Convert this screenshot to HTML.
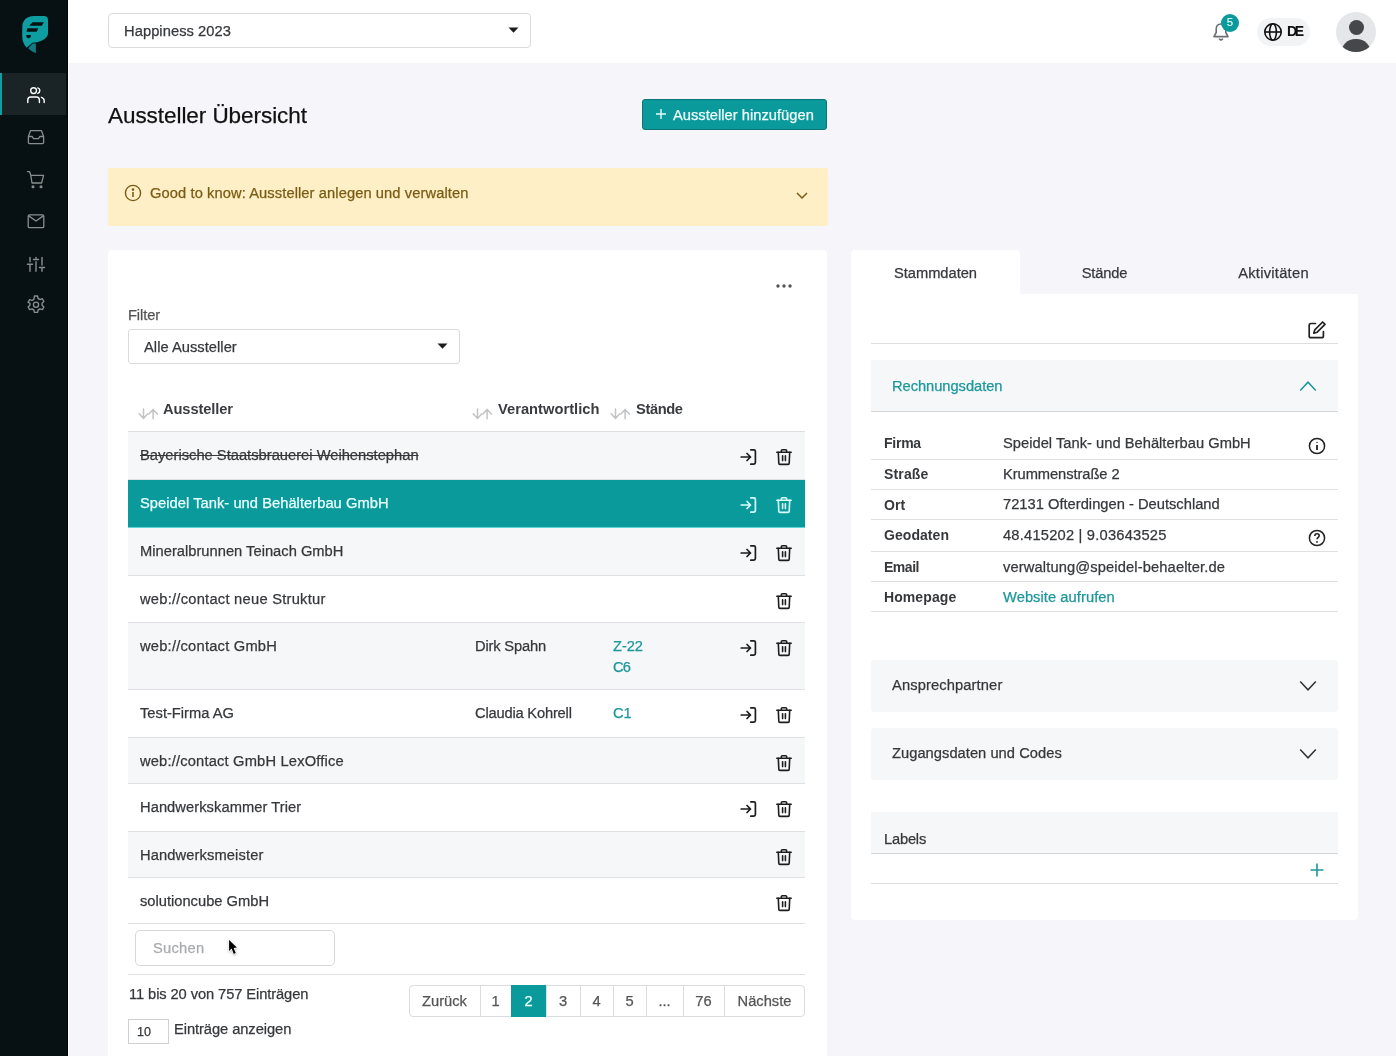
<!DOCTYPE html>
<html><head><meta charset="utf-8">
<style>
*{box-sizing:border-box;margin:0;padding:0}
html,body{width:1396px;height:1056px;overflow:hidden}
body{position:relative;background:#f5f5fa;font-family:"Liberation Sans",sans-serif;font-size:14.7px;line-height:20px;color:#333;-webkit-font-smoothing:antialiased}
.a{position:absolute}
.t{position:absolute;white-space:nowrap;will-change:transform;-webkit-text-stroke:0.25px currentColor}
.nb{-webkit-text-stroke:0}
svg{display:block}
</style></head><body>
<div class="a" style="left:0px;top:0px;width:68px;height:1056px;background:#071113;"></div>
<svg class="a" style="left:18px;top:12px" width="36" height="46" viewBox="0 0 36 46">
<path d="M4.3 14.5 C4.6 8 9 3.9 16 3.9 L26 3.9 C28.6 3.9 30 5.4 30 8 L30 21.5 C30 26.5 22 30.5 14.4 30.8 L8.7 35.8 C5.8 32.5 4.2 29 4.2 24 Z" fill="#0e9ea1"/>
<path d="M14.6 31.6 L17.9 31.6 L17.9 41.2 C15 40 12 38.3 10.2 36.3 Z" fill="#137a80"/>
<path d="M14.6 10.2 L25.9 10.2 L23.8 13.7 L11.1 13.7 Z" fill="#071113"/>
<path d="M9.4 16.3 L20.3 16.3 L18.7 19.8 L8.5 19.8 Z" fill="#071113"/>
<path d="M8.3 23.1 L12.9 23.1 L12.6 25.2 L10.6 26.6 L8.5 25.2 Z" fill="#071113"/>
</svg>
<div class="a" style="left:0px;top:73px;width:66px;height:42px;background:#1a2326;"></div>
<div class="a" style="left:67px;top:0px;width:1px;height:1056px;background:#020707;"></div>
<div class="a" style="left:68px;top:0px;width:1px;height:1056px;background:#ffffff;"></div>
<div class="a" style="left:0px;top:73px;width:1.5px;height:42px;background:#0e9ea0;"></div>
<svg class="a" style="left:26px;top:85px" width="20" height="20" viewBox="0 0 20 20" fill="none" stroke="#fff" stroke-width="1.4" stroke-linecap="round">
<circle cx="7.6" cy="5.6" r="2.9"/>
<path d="M11.8 2.9 A2.8 2.8 0 0 1 11.8 8.3"/>
<path d="M1.8 17.5 V15 C1.8 13.2 3 12 4.8 12 H10.4 C12.2 12 13.4 13.2 13.4 15 V17.5"/>
<path d="M15.4 12.3 C17 12.8 18.2 14 18.2 15.8 V17.5"/>
</svg>
<svg class="a" style="left:26px;top:127px" width="20" height="20" viewBox="0 0 20 20" fill="none" stroke="#8a8d8f" stroke-width="1.3" stroke-linejoin="round">
<path d="M2.4 9.5 L4.6 3.6 H15.4 L17.6 9.5 V15.6 C17.6 16.2 17.2 16.6 16.6 16.6 H3.4 C2.8 16.6 2.4 16.2 2.4 15.6 Z"/>
<path d="M2.4 9.5 H6.2 L7.5 11.6 H12.5 L13.8 9.5 H17.6"/>
</svg>
<svg class="a" style="left:26px;top:170px" width="20" height="20" viewBox="0 0 20 20" fill="none" stroke="#8a8d8f" stroke-width="1.3" stroke-linejoin="round" stroke-linecap="round">
<path d="M1.4 1.6 H3.6 L4.8 5.3 L6 13 H15.6 L17.6 5.3 H4.8"/>
<circle cx="7" cy="16.8" r="0.9" fill="#8a8d8f"/>
<circle cx="15" cy="16.8" r="0.9" fill="#8a8d8f"/>
</svg>
<svg class="a" style="left:26px;top:211px" width="20" height="20" viewBox="0 0 20 20" fill="none" stroke="#8a8d8f" stroke-width="1.3" stroke-linejoin="round">
<rect x="2.2" y="3.9" width="15.6" height="12.8" rx="1.3"/>
<path d="M2.4 4.6 L10 10 L17.6 4.6"/>
</svg>
<svg class="a" style="left:26px;top:254px" width="20" height="20" viewBox="0 0 20 20" fill="none" stroke="#8a8d8f" stroke-width="1.4" stroke-linecap="round">
<path d="M4 3.5 V7.8 M4 10.8 V17.3 M1.5 10.3 H6.5"/>
<path d="M10 3.5 V4.8 M10 7.8 V17.3 M7.5 5.5 H12.5"/>
<path d="M16 3.5 V11 M16 14.2 V17.3 M13.5 13.5 H18.5"/>
</svg>
<svg class="a" style="left:25px;top:294px" width="22" height="22" viewBox="0 0 24 24" fill="none" stroke="#8a8d8f" stroke-width="1.5" stroke-linejoin="round">
<path d="M10.3 2.2 h3.4 l.6 2.7 a7.5 7.5 0 0 1 2 1.15 l2.65-.85 1.7 2.95-2.05 1.85 a7.5 7.5 0 0 1 0 2.3 l2.05 1.85-1.7 2.95-2.65-.85 a7.5 7.5 0 0 1-2 1.15 l-.6 2.7 h-3.4 l-.6-2.7 a7.5 7.5 0 0 1-2-1.15 l-2.65.85-1.7-2.95 2.05-1.85 a7.5 7.5 0 0 1 0-2.3 L3.35 9.15 5.05 6.2 l2.65.85 a7.5 7.5 0 0 1 2-1.15 z"/>
<circle cx="12" cy="11.7" r="2.8"/>
</svg>
<div class="a" style="left:68px;top:0px;width:1328px;height:63px;background:#fff;"></div>
<div class="a" style="left:108px;top:13px;width:423px;height:35px;background:#fff;border:1px solid #d9dbde;border-radius:4px"></div>
<div class="t" style="left:124px;top:21px;font-size:14.7px;line-height:20px;height:20px;color:#36383c;letter-spacing:0.062px;">Happiness 2023</div>
<svg class="a" style="left:508px;top:27px" width="11" height="7" viewBox="0 0 11 7"><path d="M0.5 0.5 H10.5 L5.5 5.8 Z" fill="#1c1d1f"/></svg>
<svg class="a" style="left:1211px;top:20px" width="20" height="22" viewBox="0 0 20 22" fill="none" stroke="#6b6e72" stroke-width="1.6" stroke-linejoin="round" stroke-linecap="round">
<path d="M10 4 C6.8 4 5.2 6.3 5.2 9.2 V12.5 L3 16.6 H17 L14.8 12.5 V9.2 C14.8 6.3 13.2 4 10 4 Z"/>
<path d="M8.5 19.2 L10 20.2 L11.5 19.2"/>
</svg>
<div class="a" style="left:1221px;top:14px;width:18px;height:18px;border-radius:50%;background:#0a9a9b;color:#eaffff;font-size:11.5px;line-height:17px;text-align:center;will-change:transform;-webkit-text-stroke:0.1px #eaffff">5</div>
<div class="a" style="left:1257px;top:18px;width:53px;height:28px;background:#f2f3f5;border-radius:14px"></div>
<svg class="a" style="left:1263px;top:22px" width="20" height="20" viewBox="0 0 20 20" fill="none" stroke="#111" stroke-width="1.6">
<circle cx="10" cy="10" r="8.2"/><ellipse cx="10" cy="10" rx="3.4" ry="8.2"/><path d="M1.8 10 H18.2"/>
</svg>
<div class="t" style="left:1287px;top:21px;font-size:14px;line-height:20px;height:20px;font-weight:bold;-webkit-text-stroke:0;color:#111;letter-spacing:-2.400px;">DE</div>
<div class="a" style="left:1336px;top:12px;width:40px;height:40px;border-radius:50%;background:#e4e6e9;overflow:hidden">
<div class="a" style="left:12.5px;top:8px;width:15px;height:15px;border-radius:50%;background:#46474b"></div>
<div class="a" style="left:5px;top:26.5px;width:30px;height:24px;border-radius:48% 48% 50% 50% / 60% 60% 40% 40%;background:#46474b"></div>
</div>
<div class="t" style="left:108px;top:102px;font-size:22.5px;line-height:28px;height:28px;color:#111;letter-spacing:-0.058px;">Aussteller Übersicht</div>
<div class="a" style="left:642px;top:99px;width:185px;height:31px;background:#0a9a9b;border:1px solid #0b7476;border-radius:3px"></div>
<svg class="a" style="left:655px;top:108px" width="12" height="12" viewBox="0 0 12 12" stroke="#e6fbfb" stroke-width="1.4"><path d="M6 1 V11 M1 6 H11"/></svg>
<div class="t" style="left:673px;top:105px;font-size:14.7px;line-height:20px;height:20px;color:#eefcfc;letter-spacing:0.020px;">Aussteller hinzufügen</div>
<div class="a" style="left:108px;top:168px;width:720px;height:58px;background:#feefc6;border-radius:2px"></div>
<svg class="a" style="left:124px;top:184px" width="18" height="18" viewBox="0 0 18 18" fill="none" stroke="#7a5b14" stroke-width="1.4"><circle cx="9" cy="9" r="7.6"/><path d="M9 8 V13" stroke-width="1.6"/><circle cx="9" cy="5.6" r="0.6" fill="#7a5b14"/></svg>
<div class="t" style="left:150px;top:183px;font-size:14.7px;line-height:20px;height:20px;color:#7a5b14;letter-spacing:0.089px;">Good to know: Aussteller anlegen und verwalten</div>
<svg class="a" style="left:796px;top:191px" width="12" height="9" viewBox="0 0 12 9" fill="none" stroke="#7a5b14" stroke-width="1.5"><path d="M1 2 L6 7 L11 2"/></svg>
<div class="a" style="left:108px;top:250px;width:719px;height:820px;background:#fff;border-radius:4px"></div>
<svg class="a" style="left:775px;top:283px" width="18" height="6" viewBox="0 0 18 6" fill="#555"><circle cx="3" cy="3" r="1.7"/><circle cx="9" cy="3" r="1.7"/><circle cx="15" cy="3" r="1.7"/></svg>
<div class="t" style="left:128px;top:305px;font-size:14.7px;line-height:20px;height:20px;color:#555;letter-spacing:-0.100px;">Filter</div>
<div class="a" style="left:128px;top:329px;width:332px;height:35px;background:#fff;border:1px solid #d9dbde;border-radius:3px"></div>
<div class="t" style="left:144px;top:337px;font-size:14.7px;line-height:20px;height:20px;color:#36383c;letter-spacing:0.036px;">Alle Aussteller</div>
<svg class="a" style="left:437px;top:343px" width="11" height="7" viewBox="0 0 11 7"><path d="M0.5 0.5 H10.5 L5.5 5.8 Z" fill="#1c1d1f"/></svg>
<svg class="a" style="left:136.5px;top:406px" width="22" height="15" viewBox="0 0 22 15" fill="none" stroke="#c2c3c5" stroke-width="1.5" stroke-linecap="round" stroke-linejoin="round"><path d="M6.5 3 V12.5 M2.2 7.8 L6.5 12.5 L10.8 7.8"/><path d="M16.1 3.4 V12.7 M11.9 8 L16.1 3.4 L20.5 8"/></svg>
<div class="t" style="left:163px;top:399px;font-size:14.7px;line-height:20px;height:20px;font-weight:bold;-webkit-text-stroke:0;color:#3a3c40;letter-spacing:-0.122px;">Aussteller</div>
<svg class="a" style="left:471px;top:406px" width="22" height="15" viewBox="0 0 22 15" fill="none" stroke="#c2c3c5" stroke-width="1.5" stroke-linecap="round" stroke-linejoin="round"><path d="M6.5 3 V12.5 M2.2 7.8 L6.5 12.5 L10.8 7.8"/><path d="M16.1 3.4 V12.7 M11.9 8 L16.1 3.4 L20.5 8"/></svg>
<div class="t" style="left:498px;top:399px;font-size:14.7px;line-height:20px;height:20px;font-weight:bold;-webkit-text-stroke:0;color:#3a3c40;letter-spacing:0.015px;">Verantwortlich</div>
<svg class="a" style="left:609px;top:406px" width="22" height="15" viewBox="0 0 22 15" fill="none" stroke="#c2c3c5" stroke-width="1.5" stroke-linecap="round" stroke-linejoin="round"><path d="M6.5 3 V12.5 M2.2 7.8 L6.5 12.5 L10.8 7.8"/><path d="M16.1 3.4 V12.7 M11.9 8 L16.1 3.4 L20.5 8"/></svg>
<div class="t" style="left:636px;top:399px;font-size:14.7px;line-height:20px;height:20px;font-weight:bold;-webkit-text-stroke:0;color:#3a3c40;letter-spacing:-0.400px;">Stände</div>
<div class="a" style="left:128px;top:431px;width:677px;height:1px;background:#dcdee1;"></div>
<div class="a" style="left:128px;top:432px;width:677px;height:47px;background:#f6f7f9;"></div>
<div class="a" style="left:128px;top:479px;width:677px;height:1px;background:#dee0e3;"></div>
<div class="t" style="left:140px;top:445px;font-size:14.7px;line-height:20px;height:20px;color:#36383c;letter-spacing:0.011px;text-decoration:line-through;">Bayerische Staatsbrauerei Weihenstephan</div>
<svg class="a" style="left:740px;top:448px" width="18" height="18" viewBox="0 0 18 18" fill="none" stroke="#1c1d1f" stroke-width="1.7" stroke-linecap="round" stroke-linejoin="round"><path d="M1.2 9 H10.5 M7 5.5 L10.5 9 L7 12.5"/><path d="M10.8 1.8 H13.8 C14.8 1.8 15.4 2.4 15.4 3.4 V14.6 C15.4 15.6 14.8 16.2 13.8 16.2 H10.8"/></svg>
<svg class="a" style="left:775px;top:448px" width="18" height="18" viewBox="0 0 18 18" fill="none" stroke="#1c1d1f" stroke-width="1.6" stroke-linecap="round" stroke-linejoin="round"><path d="M6.3 3.6 V2.8 C6.3 2.1 6.7 1.7 7.4 1.7 H10.6 C11.3 1.7 11.7 2.1 11.7 2.8 V3.6"/><path d="M1.8 4.3 H16.2"/><path d="M3.3 4.3 L3.8 15.2 C3.8 15.9 4.3 16.4 5 16.4 H13 C13.7 16.4 14.2 15.9 14.2 15.2 L14.7 4.3"/><path d="M7.6 7.8 V12.6 M10.4 7.8 V12.6"/></svg>
<div class="a" style="left:128px;top:480px;width:677px;height:47px;background:#0a9a9b;"></div>
<div class="a" style="left:128px;top:527px;width:677px;height:1px;background:#5fd4d4;"></div>
<div class="t" style="left:140px;top:493px;font-size:14.7px;line-height:20px;height:20px;color:#eaffff;letter-spacing:0.042px;">Speidel Tank- und Behälterbau GmbH</div>
<svg class="a" style="left:740px;top:496px" width="18" height="18" viewBox="0 0 18 18" fill="none" stroke="#d8ffff" stroke-width="1.7" stroke-linecap="round" stroke-linejoin="round"><path d="M1.2 9 H10.5 M7 5.5 L10.5 9 L7 12.5"/><path d="M10.8 1.8 H13.8 C14.8 1.8 15.4 2.4 15.4 3.4 V14.6 C15.4 15.6 14.8 16.2 13.8 16.2 H10.8"/></svg>
<svg class="a" style="left:775px;top:496px" width="18" height="18" viewBox="0 0 18 18" fill="none" stroke="#d8ffff" stroke-width="1.6" stroke-linecap="round" stroke-linejoin="round"><path d="M6.3 3.6 V2.8 C6.3 2.1 6.7 1.7 7.4 1.7 H10.6 C11.3 1.7 11.7 2.1 11.7 2.8 V3.6"/><path d="M1.8 4.3 H16.2"/><path d="M3.3 4.3 L3.8 15.2 C3.8 15.9 4.3 16.4 5 16.4 H13 C13.7 16.4 14.2 15.9 14.2 15.2 L14.7 4.3"/><path d="M7.6 7.8 V12.6 M10.4 7.8 V12.6"/></svg>
<div class="a" style="left:128px;top:528px;width:677px;height:47px;background:#f6f7f9;"></div>
<div class="a" style="left:128px;top:575px;width:677px;height:1px;background:#dee0e3;"></div>
<div class="t" style="left:140px;top:541px;font-size:14.7px;line-height:20px;height:20px;color:#36383c;letter-spacing:0.015px;">Mineralbrunnen Teinach GmbH</div>
<svg class="a" style="left:740px;top:544px" width="18" height="18" viewBox="0 0 18 18" fill="none" stroke="#1c1d1f" stroke-width="1.7" stroke-linecap="round" stroke-linejoin="round"><path d="M1.2 9 H10.5 M7 5.5 L10.5 9 L7 12.5"/><path d="M10.8 1.8 H13.8 C14.8 1.8 15.4 2.4 15.4 3.4 V14.6 C15.4 15.6 14.8 16.2 13.8 16.2 H10.8"/></svg>
<svg class="a" style="left:775px;top:544px" width="18" height="18" viewBox="0 0 18 18" fill="none" stroke="#1c1d1f" stroke-width="1.6" stroke-linecap="round" stroke-linejoin="round"><path d="M6.3 3.6 V2.8 C6.3 2.1 6.7 1.7 7.4 1.7 H10.6 C11.3 1.7 11.7 2.1 11.7 2.8 V3.6"/><path d="M1.8 4.3 H16.2"/><path d="M3.3 4.3 L3.8 15.2 C3.8 15.9 4.3 16.4 5 16.4 H13 C13.7 16.4 14.2 15.9 14.2 15.2 L14.7 4.3"/><path d="M7.6 7.8 V12.6 M10.4 7.8 V12.6"/></svg>
<div class="a" style="left:128px;top:576px;width:677px;height:46px;background:#fff;"></div>
<div class="a" style="left:128px;top:622px;width:677px;height:1px;background:#dee0e3;"></div>
<div class="t" style="left:140px;top:589px;font-size:14.7px;line-height:20px;height:20px;color:#36383c;letter-spacing:0.250px;">web://contact neue Struktur</div>
<svg class="a" style="left:775px;top:592px" width="18" height="18" viewBox="0 0 18 18" fill="none" stroke="#1c1d1f" stroke-width="1.6" stroke-linecap="round" stroke-linejoin="round"><path d="M6.3 3.6 V2.8 C6.3 2.1 6.7 1.7 7.4 1.7 H10.6 C11.3 1.7 11.7 2.1 11.7 2.8 V3.6"/><path d="M1.8 4.3 H16.2"/><path d="M3.3 4.3 L3.8 15.2 C3.8 15.9 4.3 16.4 5 16.4 H13 C13.7 16.4 14.2 15.9 14.2 15.2 L14.7 4.3"/><path d="M7.6 7.8 V12.6 M10.4 7.8 V12.6"/></svg>
<div class="a" style="left:128px;top:623px;width:677px;height:66px;background:#f6f7f9;"></div>
<div class="a" style="left:128px;top:689px;width:677px;height:1px;background:#dee0e3;"></div>
<div class="t" style="left:140px;top:636px;font-size:14.7px;line-height:20px;height:20px;color:#36383c;letter-spacing:0.224px;">web://contact GmbH</div>
<div class="t" style="left:475px;top:636px;font-size:14.7px;line-height:20px;height:20px;color:#36383c;letter-spacing:-0.178px;">Dirk Spahn</div>
<div class="t" style="left:613px;top:636px;font-size:14.7px;line-height:20px;height:20px;color:#1c979b;letter-spacing:-0.067px;">Z-22</div>
<div class="t" style="left:613px;top:657px;font-size:14.7px;line-height:20px;height:20px;color:#1c979b;letter-spacing:-0.900px;">C6</div>
<svg class="a" style="left:740px;top:639px" width="18" height="18" viewBox="0 0 18 18" fill="none" stroke="#1c1d1f" stroke-width="1.7" stroke-linecap="round" stroke-linejoin="round"><path d="M1.2 9 H10.5 M7 5.5 L10.5 9 L7 12.5"/><path d="M10.8 1.8 H13.8 C14.8 1.8 15.4 2.4 15.4 3.4 V14.6 C15.4 15.6 14.8 16.2 13.8 16.2 H10.8"/></svg>
<svg class="a" style="left:775px;top:639px" width="18" height="18" viewBox="0 0 18 18" fill="none" stroke="#1c1d1f" stroke-width="1.6" stroke-linecap="round" stroke-linejoin="round"><path d="M6.3 3.6 V2.8 C6.3 2.1 6.7 1.7 7.4 1.7 H10.6 C11.3 1.7 11.7 2.1 11.7 2.8 V3.6"/><path d="M1.8 4.3 H16.2"/><path d="M3.3 4.3 L3.8 15.2 C3.8 15.9 4.3 16.4 5 16.4 H13 C13.7 16.4 14.2 15.9 14.2 15.2 L14.7 4.3"/><path d="M7.6 7.8 V12.6 M10.4 7.8 V12.6"/></svg>
<div class="a" style="left:128px;top:690px;width:677px;height:47px;background:#fff;"></div>
<div class="a" style="left:128px;top:737px;width:677px;height:1px;background:#dee0e3;"></div>
<div class="t" style="left:140px;top:703px;font-size:14.7px;line-height:20px;height:20px;color:#36383c;letter-spacing:0.008px;">Test-Firma AG</div>
<div class="t" style="left:475px;top:703px;font-size:14.7px;line-height:20px;height:20px;color:#36383c;letter-spacing:-0.193px;">Claudia Kohrell</div>
<div class="t" style="left:613px;top:703px;font-size:14.7px;line-height:20px;height:20px;color:#1c979b;letter-spacing:0.000px;">C1</div>
<svg class="a" style="left:740px;top:706px" width="18" height="18" viewBox="0 0 18 18" fill="none" stroke="#1c1d1f" stroke-width="1.7" stroke-linecap="round" stroke-linejoin="round"><path d="M1.2 9 H10.5 M7 5.5 L10.5 9 L7 12.5"/><path d="M10.8 1.8 H13.8 C14.8 1.8 15.4 2.4 15.4 3.4 V14.6 C15.4 15.6 14.8 16.2 13.8 16.2 H10.8"/></svg>
<svg class="a" style="left:775px;top:706px" width="18" height="18" viewBox="0 0 18 18" fill="none" stroke="#1c1d1f" stroke-width="1.6" stroke-linecap="round" stroke-linejoin="round"><path d="M6.3 3.6 V2.8 C6.3 2.1 6.7 1.7 7.4 1.7 H10.6 C11.3 1.7 11.7 2.1 11.7 2.8 V3.6"/><path d="M1.8 4.3 H16.2"/><path d="M3.3 4.3 L3.8 15.2 C3.8 15.9 4.3 16.4 5 16.4 H13 C13.7 16.4 14.2 15.9 14.2 15.2 L14.7 4.3"/><path d="M7.6 7.8 V12.6 M10.4 7.8 V12.6"/></svg>
<div class="a" style="left:128px;top:738px;width:677px;height:45px;background:#f6f7f9;"></div>
<div class="a" style="left:128px;top:783px;width:677px;height:1px;background:#dee0e3;"></div>
<div class="t" style="left:140px;top:751px;font-size:14.7px;line-height:20px;height:20px;color:#36383c;letter-spacing:0.174px;">web://contact GmbH LexOffice</div>
<svg class="a" style="left:775px;top:754px" width="18" height="18" viewBox="0 0 18 18" fill="none" stroke="#1c1d1f" stroke-width="1.6" stroke-linecap="round" stroke-linejoin="round"><path d="M6.3 3.6 V2.8 C6.3 2.1 6.7 1.7 7.4 1.7 H10.6 C11.3 1.7 11.7 2.1 11.7 2.8 V3.6"/><path d="M1.8 4.3 H16.2"/><path d="M3.3 4.3 L3.8 15.2 C3.8 15.9 4.3 16.4 5 16.4 H13 C13.7 16.4 14.2 15.9 14.2 15.2 L14.7 4.3"/><path d="M7.6 7.8 V12.6 M10.4 7.8 V12.6"/></svg>
<div class="a" style="left:128px;top:784px;width:677px;height:47px;background:#fff;"></div>
<div class="a" style="left:128px;top:831px;width:677px;height:1px;background:#dee0e3;"></div>
<div class="t" style="left:140px;top:797px;font-size:14.7px;line-height:20px;height:20px;color:#36383c;letter-spacing:0.060px;">Handwerkskammer Trier</div>
<svg class="a" style="left:740px;top:800px" width="18" height="18" viewBox="0 0 18 18" fill="none" stroke="#1c1d1f" stroke-width="1.7" stroke-linecap="round" stroke-linejoin="round"><path d="M1.2 9 H10.5 M7 5.5 L10.5 9 L7 12.5"/><path d="M10.8 1.8 H13.8 C14.8 1.8 15.4 2.4 15.4 3.4 V14.6 C15.4 15.6 14.8 16.2 13.8 16.2 H10.8"/></svg>
<svg class="a" style="left:775px;top:800px" width="18" height="18" viewBox="0 0 18 18" fill="none" stroke="#1c1d1f" stroke-width="1.6" stroke-linecap="round" stroke-linejoin="round"><path d="M6.3 3.6 V2.8 C6.3 2.1 6.7 1.7 7.4 1.7 H10.6 C11.3 1.7 11.7 2.1 11.7 2.8 V3.6"/><path d="M1.8 4.3 H16.2"/><path d="M3.3 4.3 L3.8 15.2 C3.8 15.9 4.3 16.4 5 16.4 H13 C13.7 16.4 14.2 15.9 14.2 15.2 L14.7 4.3"/><path d="M7.6 7.8 V12.6 M10.4 7.8 V12.6"/></svg>
<div class="a" style="left:128px;top:832px;width:677px;height:45px;background:#f6f7f9;"></div>
<div class="a" style="left:128px;top:877px;width:677px;height:1px;background:#dee0e3;"></div>
<div class="t" style="left:140px;top:845px;font-size:14.7px;line-height:20px;height:20px;color:#36383c;letter-spacing:0.113px;">Handwerksmeister</div>
<svg class="a" style="left:775px;top:848px" width="18" height="18" viewBox="0 0 18 18" fill="none" stroke="#1c1d1f" stroke-width="1.6" stroke-linecap="round" stroke-linejoin="round"><path d="M6.3 3.6 V2.8 C6.3 2.1 6.7 1.7 7.4 1.7 H10.6 C11.3 1.7 11.7 2.1 11.7 2.8 V3.6"/><path d="M1.8 4.3 H16.2"/><path d="M3.3 4.3 L3.8 15.2 C3.8 15.9 4.3 16.4 5 16.4 H13 C13.7 16.4 14.2 15.9 14.2 15.2 L14.7 4.3"/><path d="M7.6 7.8 V12.6 M10.4 7.8 V12.6"/></svg>
<div class="a" style="left:128px;top:878px;width:677px;height:45px;background:#fff;"></div>
<div class="a" style="left:128px;top:923px;width:677px;height:1px;background:#dee0e3;"></div>
<div class="t" style="left:140px;top:891px;font-size:14.7px;line-height:20px;height:20px;color:#36383c;letter-spacing:0.000px;">solutioncube GmbH</div>
<svg class="a" style="left:775px;top:894px" width="18" height="18" viewBox="0 0 18 18" fill="none" stroke="#1c1d1f" stroke-width="1.6" stroke-linecap="round" stroke-linejoin="round"><path d="M6.3 3.6 V2.8 C6.3 2.1 6.7 1.7 7.4 1.7 H10.6 C11.3 1.7 11.7 2.1 11.7 2.8 V3.6"/><path d="M1.8 4.3 H16.2"/><path d="M3.3 4.3 L3.8 15.2 C3.8 15.9 4.3 16.4 5 16.4 H13 C13.7 16.4 14.2 15.9 14.2 15.2 L14.7 4.3"/><path d="M7.6 7.8 V12.6 M10.4 7.8 V12.6"/></svg>
<div class="a" style="left:135px;top:930px;width:200px;height:36px;background:#fff;border:1px solid #d5d7da;border-radius:5px"></div>
<div class="t" style="left:153px;top:938px;font-size:14.7px;line-height:20px;height:20px;color:#a9abae;letter-spacing:0.260px;">Suchen</div>
<div class="a" style="left:128px;top:974px;width:677px;height:1px;background:#dee0e3;"></div>
<div class="t" style="left:129px;top:984px;font-size:14.7px;line-height:20px;height:20px;color:#36383c;letter-spacing:-0.092px;">11 bis 20 von 757 Einträgen</div>
<div class="a" style="left:128px;top:1019px;width:41px;height:25px;background:#fff;border:1px solid #cfd1d4"></div>
<div class="t" style="left:137px;top:1022px;font-size:12.5px;line-height:20px;height:20px;color:#36383c;letter-spacing:0.000px;">10</div>
<div class="t" style="left:174px;top:1019px;font-size:14.7px;line-height:20px;height:20px;color:#36383c;letter-spacing:-0.069px;">Einträge anzeigen</div>
<div class="a" style="left:409px;top:985px;width:396px;height:32px;background:#fff;border:1px solid #dadcdf;border-radius:4px"></div>
<div class="t" style="left:409px;top:991px;font-size:14.7px;line-height:20px;height:20px;color:#555;letter-spacing:0.000px;width:71px;text-align:center;">Zurück</div>
<div class="a" style="left:480px;top:985px;width:1px;height:32px;background:#dadcdf;"></div>
<div class="t" style="left:480px;top:991px;font-size:14.7px;line-height:20px;height:20px;color:#555;letter-spacing:0.000px;width:31px;text-align:center;">1</div>
<div class="a" style="left:511px;top:985px;width:35px;height:32px;background:#0a9a9b;"></div>
<div class="t" style="left:511px;top:991px;font-size:14.7px;line-height:20px;height:20px;color:#eaffff;letter-spacing:0.000px;width:35px;text-align:center;">2</div>
<div class="a" style="left:546px;top:985px;width:1px;height:32px;background:#dadcdf;"></div>
<div class="t" style="left:546px;top:991px;font-size:14.7px;line-height:20px;height:20px;color:#555;letter-spacing:0.000px;width:34px;text-align:center;">3</div>
<div class="a" style="left:580px;top:985px;width:1px;height:32px;background:#dadcdf;"></div>
<div class="t" style="left:580px;top:991px;font-size:14.7px;line-height:20px;height:20px;color:#555;letter-spacing:0.000px;width:33px;text-align:center;">4</div>
<div class="a" style="left:613px;top:985px;width:1px;height:32px;background:#dadcdf;"></div>
<div class="t" style="left:613px;top:991px;font-size:14.7px;line-height:20px;height:20px;color:#555;letter-spacing:0.000px;width:33px;text-align:center;">5</div>
<div class="a" style="left:646px;top:985px;width:1px;height:32px;background:#dadcdf;"></div>
<div class="t" style="left:646px;top:991px;font-size:14.7px;line-height:20px;height:20px;color:#555;letter-spacing:0.000px;width:37px;text-align:center;">...</div>
<div class="a" style="left:683px;top:985px;width:1px;height:32px;background:#dadcdf;"></div>
<div class="t" style="left:683px;top:991px;font-size:14.7px;line-height:20px;height:20px;color:#555;letter-spacing:0.000px;width:41px;text-align:center;">76</div>
<div class="a" style="left:724px;top:985px;width:1px;height:32px;background:#dadcdf;"></div>
<div class="t" style="left:724px;top:991px;font-size:14.7px;line-height:20px;height:20px;color:#555;letter-spacing:0.000px;width:81px;text-align:center;">Nächste</div>
<svg class="a" style="left:227px;top:938px;filter:drop-shadow(0 1px 1px rgba(0,0,0,0.25))" width="14" height="19" viewBox="0 0 14 19"><path d="M2.1 1.9 L2.1 12.9 L4.6 10.6 L6.8 15.9 L8.8 15.1 L6.6 9.9 L9.9 9.6 Z" fill="#000" stroke="#fff" stroke-width="1.3" stroke-linejoin="round" paint-order="stroke"/></svg>
<div class="a" style="left:851px;top:294px;width:507px;height:626px;background:#fff;border-radius:0 0 4px 4px"></div>
<div class="a" style="left:851px;top:250px;width:169px;height:44px;background:#fff;border-radius:4px 4px 0 0"></div>
<div class="t" style="left:851px;top:263px;font-size:14.7px;line-height:20px;height:20px;color:#36383c;letter-spacing:-0.033px;width:169px;text-align:center;">Stammdaten</div>
<div class="t" style="left:1020px;top:263px;font-size:14.7px;line-height:20px;height:20px;color:#36383c;letter-spacing:-0.140px;width:169px;text-align:center;">Stände</div>
<div class="t" style="left:1189px;top:263px;font-size:14.7px;line-height:20px;height:20px;color:#36383c;letter-spacing:0.260px;width:169px;text-align:center;">Aktivitäten</div>
<svg class="a" style="left:1307px;top:320px" width="20" height="20" viewBox="0 0 20 20" fill="none" stroke="#222" stroke-width="1.7" stroke-linecap="round" stroke-linejoin="round"><path d="M8.5 3.5 H4 C2.9 3.5 2.2 4.2 2.2 5.3 V15.9 C2.2 17 2.9 17.7 4 17.7 H14.6 C15.7 17.7 16.4 17 16.4 15.9 V11.5"/><path d="M15.6 2 L18 4.4 L10.2 12.2 L6.8 13.2 L7.8 9.8 Z"/></svg>
<div class="a" style="left:871px;top:343px;width:467px;height:1px;background:#dcdee1;"></div>
<div class="a" style="left:871px;top:360px;width:467px;height:51px;background:#f6f7f9;"></div>
<div class="a" style="left:871px;top:411px;width:467px;height:1px;background:#d3d5d8;"></div>
<div class="t" style="left:892px;top:376px;font-size:14.7px;line-height:20px;height:20px;color:#1c979b;letter-spacing:-0.046px;">Rechnungsdaten</div>
<svg class="a" style="left:1299px;top:380px" width="18" height="12" viewBox="0 0 18 12" fill="none" stroke="#1c979b" stroke-width="1.5"><path d="M1.2 10.5 L9 2.2 L16.8 10.5"/></svg>
<div class="t" style="left:884px;top:433px;font-size:14px;line-height:20px;height:20px;font-weight:bold;-webkit-text-stroke:0;color:#36383c;letter-spacing:-0.250px;">Firma</div>
<div class="t" style="left:1003px;top:433px;font-size:14.7px;line-height:20px;height:20px;color:#36383c;letter-spacing:0.018px;">Speidel Tank- und Behälterbau GmbH</div>
<div class="a" style="left:871px;top:459px;width:467px;height:1px;background:#dee0e3;"></div>
<div class="t" style="left:884px;top:464px;font-size:14px;line-height:20px;height:20px;font-weight:bold;-webkit-text-stroke:0;color:#36383c;letter-spacing:0.160px;">Straße</div>
<div class="t" style="left:1003px;top:464px;font-size:14.7px;line-height:20px;height:20px;color:#36383c;letter-spacing:-0.064px;">Krummenstraße 2</div>
<div class="a" style="left:871px;top:489px;width:467px;height:1px;background:#dee0e3;"></div>
<div class="t" style="left:884px;top:495px;font-size:14px;line-height:20px;height:20px;font-weight:bold;-webkit-text-stroke:0;color:#36383c;letter-spacing:0.100px;">Ort</div>
<div class="t" style="left:1003px;top:494px;font-size:14.7px;line-height:20px;height:20px;color:#36383c;letter-spacing:0.010px;">72131 Ofterdingen - Deutschland</div>
<div class="a" style="left:871px;top:519px;width:467px;height:1px;background:#dee0e3;"></div>
<div class="t" style="left:884px;top:525px;font-size:14px;line-height:20px;height:20px;font-weight:bold;-webkit-text-stroke:0;color:#36383c;letter-spacing:0.057px;">Geodaten</div>
<div class="t" style="left:1003px;top:525px;font-size:14.7px;line-height:20px;height:20px;color:#36383c;letter-spacing:0.205px;">48.415202 | 9.03643525</div>
<div class="a" style="left:871px;top:551px;width:467px;height:1px;background:#dee0e3;"></div>
<div class="t" style="left:884px;top:557px;font-size:14px;line-height:20px;height:20px;font-weight:bold;-webkit-text-stroke:0;color:#36383c;letter-spacing:-0.475px;">Email</div>
<div class="t" style="left:1003px;top:557px;font-size:14.7px;line-height:20px;height:20px;color:#36383c;letter-spacing:0.123px;">verwaltung@speidel-behaelter.de</div>
<div class="a" style="left:871px;top:581px;width:467px;height:1px;background:#dee0e3;"></div>
<div class="t" style="left:884px;top:587px;font-size:14px;line-height:20px;height:20px;font-weight:bold;-webkit-text-stroke:0;color:#36383c;letter-spacing:0.086px;">Homepage</div>
<div class="t" style="left:1003px;top:587px;font-size:14.7px;line-height:20px;height:20px;color:#1c979b;letter-spacing:0.060px;">Website aufrufen</div>
<div class="a" style="left:871px;top:611px;width:467px;height:1px;background:#dee0e3;"></div>
<svg class="a" style="left:1308px;top:437px" width="18" height="18" viewBox="0 0 18 18" fill="none" stroke="#222" stroke-width="1.5"><circle cx="9" cy="9" r="7.6"/><path d="M9 8 V13" stroke-width="1.8"/><circle cx="9" cy="5.5" r="0.7" fill="#222" stroke="none"/></svg>
<svg class="a" style="left:1308px;top:529px" width="18" height="18" viewBox="0 0 18 18" fill="none" stroke="#222" stroke-width="1.5"><circle cx="9" cy="9" r="7.6"/><path d="M6.8 7 C6.8 5.6 7.8 4.8 9 4.8 C10.3 4.8 11.2 5.6 11.2 6.8 C11.2 8.3 9 8.5 9 10.3" stroke-width="1.6"/><circle cx="9" cy="12.9" r="0.9" fill="#222" stroke="none"/></svg>
<div class="a" style="left:871px;top:660px;width:467px;height:52px;background:#f6f7f9;border-radius:3px"></div>
<div class="t" style="left:892px;top:675px;font-size:14.7px;line-height:20px;height:20px;color:#36383c;letter-spacing:0.121px;">Ansprechpartner</div>
<svg class="a" style="left:1299px;top:680px" width="18" height="12" viewBox="0 0 18 12" fill="none" stroke="#333" stroke-width="1.5"><path d="M1.2 1.5 L9 9.8 L16.8 1.5"/></svg>
<div class="a" style="left:871px;top:728px;width:467px;height:52px;background:#f6f7f9;border-radius:3px"></div>
<div class="t" style="left:892px;top:743px;font-size:14.7px;line-height:20px;height:20px;color:#36383c;letter-spacing:0.033px;">Zugangsdaten und Codes</div>
<svg class="a" style="left:1299px;top:748px" width="18" height="12" viewBox="0 0 18 12" fill="none" stroke="#333" stroke-width="1.5"><path d="M1.2 1.5 L9 9.8 L16.8 1.5"/></svg>
<div class="a" style="left:871px;top:812px;width:467px;height:41px;background:#f6f7f9;"></div>
<div class="a" style="left:871px;top:853px;width:467px;height:1px;background:#d3d5d8;"></div>
<div class="t" style="left:884px;top:829px;font-size:14.7px;line-height:20px;height:20px;color:#36383c;letter-spacing:-0.200px;">Labels</div>
<div class="a" style="left:871px;top:883px;width:467px;height:1px;background:#dcdee1;"></div>
<svg class="a" style="left:1310px;top:863px" width="14" height="14" viewBox="0 0 14 14" stroke="#1c979b" stroke-width="1.6"><path d="M7 0.5 V13.5 M0.5 7 H13.5"/></svg>
</body></html>
